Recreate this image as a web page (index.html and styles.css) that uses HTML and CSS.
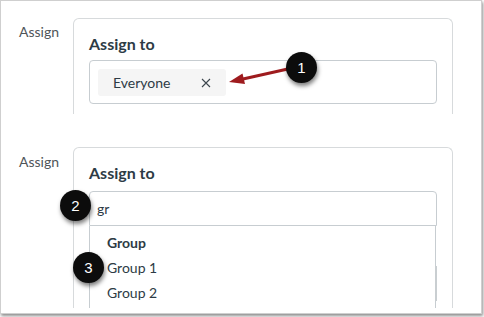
FILE: index.html
```html
<!DOCTYPE html>
<html lang="en">
<head>
    <meta charset="UTF-8">
    <title>Assign to</title>
    <link rel="stylesheet" href="styles.css">
</head>
<body>
    <div class="frame">
        <section class="row">
            <div class="label">Assign</div>
            <div class="card card-top">
                <h2>Assign to</h2>
                <div class="field">
                    <span class="pill">
                        <span class="pill-text">Everyone</span>
                        <svg class="pill-x" width="10" height="10" viewBox="0 0 10 10">
                            <path d="M1 1 L9 9 M9 1 L1 9" stroke="#3d474e" stroke-width="1.1" fill="none"/>
                        </svg>
                    </span>
                </div>
            </div>
        </section>

        <section class="row row-search">
            <div class="label">Assign</div>
            <div class="card card-search">
                <h2>Assign to</h2>
                <div class="field field-search">gr</div>
                <div class="options">
                    <div class="option option-head">Group</div>
                    <div class="option">Group 1</div>
                    <div class="option">Group 2</div>
                    <div class="thumb"></div>
                </div>
            </div>
        </section>

        <!-- callouts -->
        <svg class="arrow" width="482" height="314" viewBox="1 1 482 314">
            <line x1="290" y1="68.5" x2="243" y2="79" stroke="#9e1b1e" stroke-width="3"/>
            <polygon points="229,82 245,84 242.5,73.5" fill="#9e1b1e"/>
        </svg>
        <span class="callout callout-1">1</span>
        <span class="callout callout-2">2</span>
        <span class="callout callout-3">3</span>
    </div>
</body>
</html>
```

FILE: styles.css
```css
:root {
    --text-color: #2d3b45;
    --label-color: #4f5559;
    --card-border: #d7dadc;
    --input-border: #c7cdd1;
    --pill-bg: #f5f5f5;
}
* {
    margin: 0;
    padding: 0;
    box-sizing: border-box;
}
body {
    font-family: Lato, 'Liberation Sans', sans-serif;
    color: var(--text-color);
    background: #fff;
    width: 484px;
    height: 317px;
    overflow: hidden;
}
.frame {
    position: relative;
    width: 482px;
    height: 314px;
    border: 1px solid #cfcfcf;
    box-shadow: 1px 2px 3px rgba(0, 0, 0, 0.45);
    padding-top: 17px;
    overflow: hidden;
}
.row {
    display: flex;
    align-items: flex-start;
}
.row-search {
    margin-top: 33px;
}
.label {
    width: 72px;
    padding-left: 18px;
    padding-top: 6px;
    font-size: 14px;
    line-height: 1.2;
    color: var(--label-color);
}
.row-search .label {
    padding-top: 7px;
}
.card {
    width: 380px;
    border: 1px solid var(--card-border);
    border-bottom: none;
    border-radius: 6px 6px 0 0;
    padding: 15px 15px 0;
    overflow: hidden;
}
.card-top {
    height: 96px;
}
.card-search {
    height: 161px;
}
h2 {
    font-size: 16px;
    font-weight: 700;
    line-height: 19px;
    margin-bottom: 7px;
}
.card-search h2 {
    margin-bottom: 9px;
}
.field {
    border: 1px solid var(--input-border);
    border-radius: 4px;
    height: 44px;
    padding: 8px;
}
.pill {
    display: inline-flex;
    align-items: center;
    justify-content: space-between;
    width: 128px;
    height: 27px;
    padding: 0 15px 0 15px;
    background: var(--pill-bg);
    border-radius: 3px;
    font-size: 14px;
}
.pill-x {
    display: block;
}
.field-search {
    height: 35px;
    padding: 0 7px;
    font-size: 14px;
    line-height: 33px;
    border-radius: 4px 4px 0 0;
}
.options {
    position: relative;
    margin-right: 1px;
    border-left: 1px solid var(--input-border);
    border-right: 1px solid var(--input-border);
    padding: 4px 0 0 17px;
    height: 120px;
}
.option {
    font-size: 14px;
    line-height: 25px;
}
.option-head {
    font-weight: 700;
}
.thumb {
    position: absolute;
    right: -2px;
    top: 40px;
    width: 2px;
    height: 35px;
    background: #c9ced1;
}
.arrow {
    position: absolute;
    left: 0;
    top: 0;
    pointer-events: none;
}
.callout {
    position: absolute;
    width: 31px;
    height: 31px;
    border-radius: 50%;
    background: #0c0c0c;
    color: #fff;
    font-family: 'Liberation Sans', Arial, sans-serif;
    font-size: 15px;
    line-height: 31px;
    text-align: center;
    box-shadow: 1px 3px 4px rgba(0, 0, 0, 0.5);
}
.callout-1 {
    left: 285px;
    top: 51px;
}
.callout-2 {
    left: 59px;
    top: 189px;
}
.callout-3 {
    left: 72px;
    top: 251px;
}
```
